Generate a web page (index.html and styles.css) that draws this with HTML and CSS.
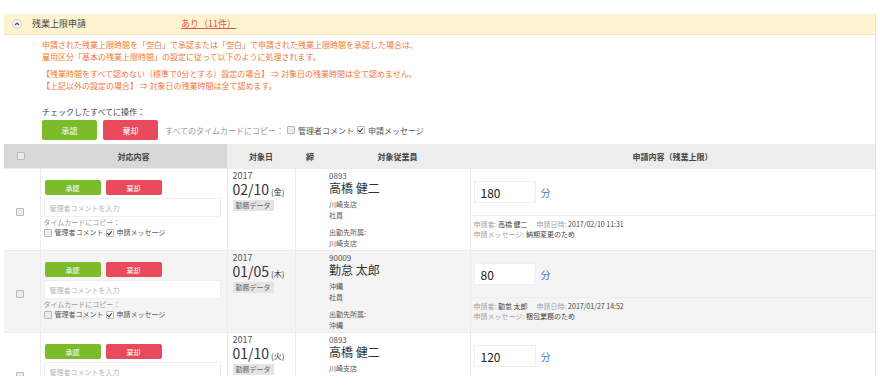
FILE: index.html
```html
<!DOCTYPE html>
<html lang="ja">
  <head>
    <meta charset="utf-8" />
    <link rel="stylesheet" href="styles.css">
    <title>残業上限申請</title>
  </head>
  <body>
    <div class="page">
      <div class="section-bar">
        <span class="toggle">
          <svg width="10" height="10" viewBox="0 0 10 10"><circle cx="5" cy="5" r="4.5" fill="#f2f2f2" stroke="#cfcfcf"/><polyline points="3,6 5,4 7,6" fill="none" stroke="#555" stroke-width="1.2"/></svg>
        </span>
        <span class="section-title">残業上限申請</span>
        <a class="section-count" href="#">あり（11件）</a>
      </div>

      <div class="notice">
        <p>申請された残業上限時間を「空白」で承認または「空白」で申請された残業上限時間を承認した場合は、<br>雇用区分「基本の残業上限時間」の設定に従って以下のように処理されます。</p>
        <p>【残業時間をすべて認めない（標準で0分とする）設定の場合】 ⇒ 対象日の残業時間は全て認めません。<br>【上記以外の設定の場合】 ⇒ 対象日の残業時間は全て認めます。</p>
      </div>

      <div class="bulk">
        <div class="bulk-label">チェックしたすべてに操作：</div>
        <div class="bulk-actions">
          <button class="btn btn-approve">承認</button>
          <button class="btn btn-reject">棄却</button>
          <span class="copy-label">すべてのタイムカードにコピー：</span>
          <span class="check"><span class="cb"></span>管理者コメント</span>
          <span class="check"><span class="cb on"></span>申請メッセージ</span>
        </div>
      </div>

      <table class="requests">
        <colgroup>
          <col class="c-check"><col class="c-action"><col class="c-date"><col class="c-close"><col class="c-emp"><col class="c-app">
        </colgroup>
        <thead>
          <tr>
            <th class="th-dark"><span class="cb"></span></th>
            <th class="th-dark">対応内容</th>
            <th>対象日</th>
            <th>締</th>
            <th>対象従業員</th>
            <th>申請内容（残業上限）</th>
          </tr>
        </thead>
        <tbody>
          <tr>
            <td class="col-check"><span class="cb"></span></td>
            <td class="col-action">
              <div class="row-buttons">
                <button class="btn btn-sm btn-approve">承認</button>
                <button class="btn btn-sm btn-reject">棄却</button>
              </div>
              <div class="comment-box">管理者コメントを入力</div>
              <div class="copy-row">タイムカードにコピー：</div>
              <div class="copy-checks">
                <span class="check"><span class="cb"></span>管理者コメント</span>
                <span class="check"><span class="cb on"></span>申請メッセージ</span>
              </div>
            </td>
            <td class="col-date">
              <div class="year">2017</div>
              <div class="day">02/10<span class="weekday">(金)</span></div>
              <div class="badge">勤務データ</div>
            </td>
            <td class="col-close"></td>
            <td class="col-emp">
              <div class="emp-code">0893</div>
              <div class="emp-name">高橋 健二</div>
              <div class="emp-info">川崎支店<br>社員</div>
              <div class="emp-info emp-dest">出勤先所属:<br>川崎支店</div>
            </td>
            <td class="col-app">
              <div class="app-value"><span class="minutes">180</span><span class="unit">分</span></div>
              <div class="app-meta">
                <span class="meta-key">申請者:</span> 高橋 健二<span class="meta-key meta-gap">申請日時:</span> 2017/02/10 11:31<br>
                <span class="meta-key">申請メッセージ:</span> 納期変更のため
              </div>
            </td>
          </tr>
          <tr class="alt">
            <td class="col-check"><span class="cb"></span></td>
            <td class="col-action">
              <div class="row-buttons">
                <button class="btn btn-sm btn-approve">承認</button>
                <button class="btn btn-sm btn-reject">棄却</button>
              </div>
              <div class="comment-box">管理者コメントを入力</div>
              <div class="copy-row">タイムカードにコピー：</div>
              <div class="copy-checks">
                <span class="check"><span class="cb"></span>管理者コメント</span>
                <span class="check"><span class="cb on"></span>申請メッセージ</span>
              </div>
            </td>
            <td class="col-date">
              <div class="year">2017</div>
              <div class="day">01/05<span class="weekday">(木)</span></div>
              <div class="badge">勤務データ</div>
            </td>
            <td class="col-close"></td>
            <td class="col-emp">
              <div class="emp-code">90009</div>
              <div class="emp-name">勤怠 太郎</div>
              <div class="emp-info">沖縄<br>社員</div>
              <div class="emp-info emp-dest">出勤先所属:<br>沖縄</div>
            </td>
            <td class="col-app">
              <div class="app-value"><span class="minutes">80</span><span class="unit">分</span></div>
              <div class="app-meta">
                <span class="meta-key">申請者:</span> 勤怠 太郎<span class="meta-key meta-gap">申請日時:</span> 2017/01/27 14:52<br>
                <span class="meta-key">申請メッセージ:</span> 梱包業務のため
              </div>
            </td>
          </tr>
          <tr>
            <td class="col-check"><span class="cb"></span></td>
            <td class="col-action">
              <div class="row-buttons">
                <button class="btn btn-sm btn-approve">承認</button>
                <button class="btn btn-sm btn-reject">棄却</button>
              </div>
              <div class="comment-box">管理者コメントを入力</div>
              <div class="copy-row">タイムカードにコピー：</div>
              <div class="copy-checks">
                <span class="check"><span class="cb"></span>管理者コメント</span>
                <span class="check"><span class="cb on"></span>申請メッセージ</span>
              </div>
            </td>
            <td class="col-date">
              <div class="year">2017</div>
              <div class="day">01/10<span class="weekday">(火)</span></div>
              <div class="badge">勤務データ</div>
            </td>
            <td class="col-close"></td>
            <td class="col-emp">
              <div class="emp-code">0893</div>
              <div class="emp-name">高橋 健二</div>
              <div class="emp-info">川崎支店<br>社員</div>
              <div class="emp-info emp-dest">出勤先所属:<br>川崎支店</div>
            </td>
            <td class="col-app">
              <div class="app-value"><span class="minutes">120</span><span class="unit">分</span></div>
              <div class="app-meta">
                <span class="meta-key">申請者:</span> 高橋 健二<span class="meta-key meta-gap">申請日時:</span> 2017/01/12 09:05<br>
                <span class="meta-key">申請メッセージ:</span> 納期変更のため
              </div>
            </td>
          </tr>
        </tbody>
      </table>
    </div>
  </body>
</html>
```

FILE: styles.css
```css
html,
body {
  margin: 0;
  overflow: hidden;
}

body {
  background-color: #fff;
  color: #444;
  font-family: "Noto Sans CJK JP", sans-serif;
}

.page {
  margin: 14px 0 0 4px;
  width: 872px;
  height: 362px;
  overflow: hidden;
  border-right: 1px solid #e4e4e4;
  box-sizing: border-box;
}

/* section header */

.section-bar {
  display: flex;
  align-items: center;
  height: 21px;
  background: #fdf3cf;
  border-bottom: 1px solid #f4e7bd;
  box-sizing: border-box;
  font-size: 9px;
  line-height: 12px;
}

.toggle {
  display: flex;
  margin-left: 8px;
}

.section-title {
  width: 149px;
  margin-left: 10px;
  color: #444;
}

.section-count {
  color: #e2524c;
  text-decoration: underline;
}

.notice {
  padding-left: 38px;
  color: #f07838;
  font-size: 8px;
  line-height: 12px;
}

.notice p {
  margin: 4px 0 0;
}

.notice p + p {
  margin-top: 5px;
}

/* bulk actions */

.bulk {
  padding-left: 38px;
  margin-top: 14px;
}

.bulk-label {
  font-size: 8px;
  line-height: 12px;
  color: #444;
}

.bulk-actions {
  display: flex;
  align-items: center;
  margin-top: 2px;
}

.btn {
  border: 0;
  border-radius: 2px;
  padding: 0;
  color: #fff;
  font-family: inherit;
  font-size: 8px;
  width: 55px;
  height: 20px;
}

.btn-approve {
  background: #7cbb2a;
}

.btn-reject {
  background: #e94a5b;
  margin-left: 6px;
}

.copy-label {
  margin-left: 7px;
  color: #9a9a9a;
  font-size: 8px;
}

.check {
  display: inline-flex;
  align-items: center;
  color: #555;
  font-size: 8px;
  margin-left: 3px;
}

.cb {
  display: inline-block;
  width: 6px;
  height: 6px;
  border: 1px solid #b9b9b9;
  background: #ececec;
  border-radius: 1px;
  margin-right: 3px;
  position: relative;
}

.cb.on {
  background: #fff;
}

.cb.on::after {
  content: "";
  position: absolute;
  left: 1px;
  top: 0;
  width: 2px;
  height: 4px;
  border: solid #333;
  border-width: 0 1px 1px 0;
  transform: rotate(40deg);
}

/* table */

.requests {
  margin-top: 4px;
  width: 871px;
  border-collapse: collapse;
  table-layout: fixed;
}

.c-check { width: 36px; }
.c-action { width: 187px; }
.c-date { width: 68px; }
.c-close { width: 30px; }
.c-emp { width: 145px; }

.requests th {
  height: 24px;
  padding: 0;
  background: #ededed;
  font-size: 8px;
  font-weight: bold;
  color: #444;
  text-align: center;
}

.requests th.th-dark {
  background: #d8d8d8;
}

.requests td {
  padding: 0;
  vertical-align: top;
  border-top: 1px solid #ececec;
  line-height: 11px;
}

.requests tbody tr {
  height: 82px;
}

.requests tr.alt td {
  background: #f4f4f4;
}

.col-check {
  text-align: center;
  border-right: 1px solid #ececec;
}

.requests td.col-check {
  vertical-align: middle;
}

.col-action {
  padding: 11px 6px 0 3px !important;
  border-right: 1px solid #ececec;
}

.row-buttons {
  display: flex;
  gap: 5px;
  margin-left: 1px;
}

.btn-sm {
  width: 56px;
  height: 15px;
  font-size: 7px;
}

.btn-sm.btn-reject {
  margin-left: 0;
}

.comment-box {
  margin-top: 3px;
  height: 19px;
  line-height: 19px;
  padding-left: 5px;
  background: #fff;
  border: 1px solid #efefef;
  box-sizing: border-box;
  color: #b5b5b5;
  font-size: 7px;
}

.copy-row {
  color: #999;
  font-size: 7px;
  line-height: 10px;
}

.copy-checks {
  display: flex;
  line-height: 11px;
}

.copy-checks .check {
  font-size: 7px;
  margin-left: 0;
  margin-right: 2px;
}

.col-date {
  padding: 1px 0 0 5px !important;
  border-right: 1px solid #ececec;
}

.year {
  font-size: 9px;
  line-height: 12px;
  color: #555;
}

.day {
  font-size: 14px;
  line-height: 14px;
  color: #333;
}

.weekday {
  font-size: 8px;
  margin-left: 2px;
}

.badge {
  width: fit-content;
  margin-top: 1px;
  padding: 0 3px;
  background: #e4e4e4;
  color: #666;
  font-size: 7px;
  line-height: 11px;
}

.col-emp {
  padding: 2px 0 0 4px !important;
  border-right: 1px solid #ececec;
}

.emp-code {
  font-size: 8px;
  line-height: 10px;
  color: #555;
}

.emp-name {
  font-size: 12px;
  line-height: 14px;
  color: #333;
}

.emp-info {
  margin-top: 4px;
  font-size: 7px;
  line-height: 11px;
  color: #555;
}

.emp-info.emp-dest {
  margin-top: 6px;
}

.app-value {
  display: flex;
  align-items: center;
  height: 47px;
  padding: 0 0 0 3px;
  border-bottom: 1px solid #ececec;
  box-sizing: border-box;
}

.minutes {
  width: 62px;
  height: 22px;
  line-height: 22px;
  padding-left: 6px;
  box-sizing: border-box;
  background: #fff;
  border: 1px solid #f0f0f0;
  font-size: 12px;
  color: #222;
}

.unit {
  margin-left: 5px;
  color: #3b7dd8;
  font-size: 10px;
}

.app-meta {
  padding: 3px 0 0 3px;
  font-size: 7px;
  line-height: 10px;
  color: #444;
}

.meta-key {
  color: #a5a5a5;
}

.meta-gap {
  margin-left: 9px;
}
```
